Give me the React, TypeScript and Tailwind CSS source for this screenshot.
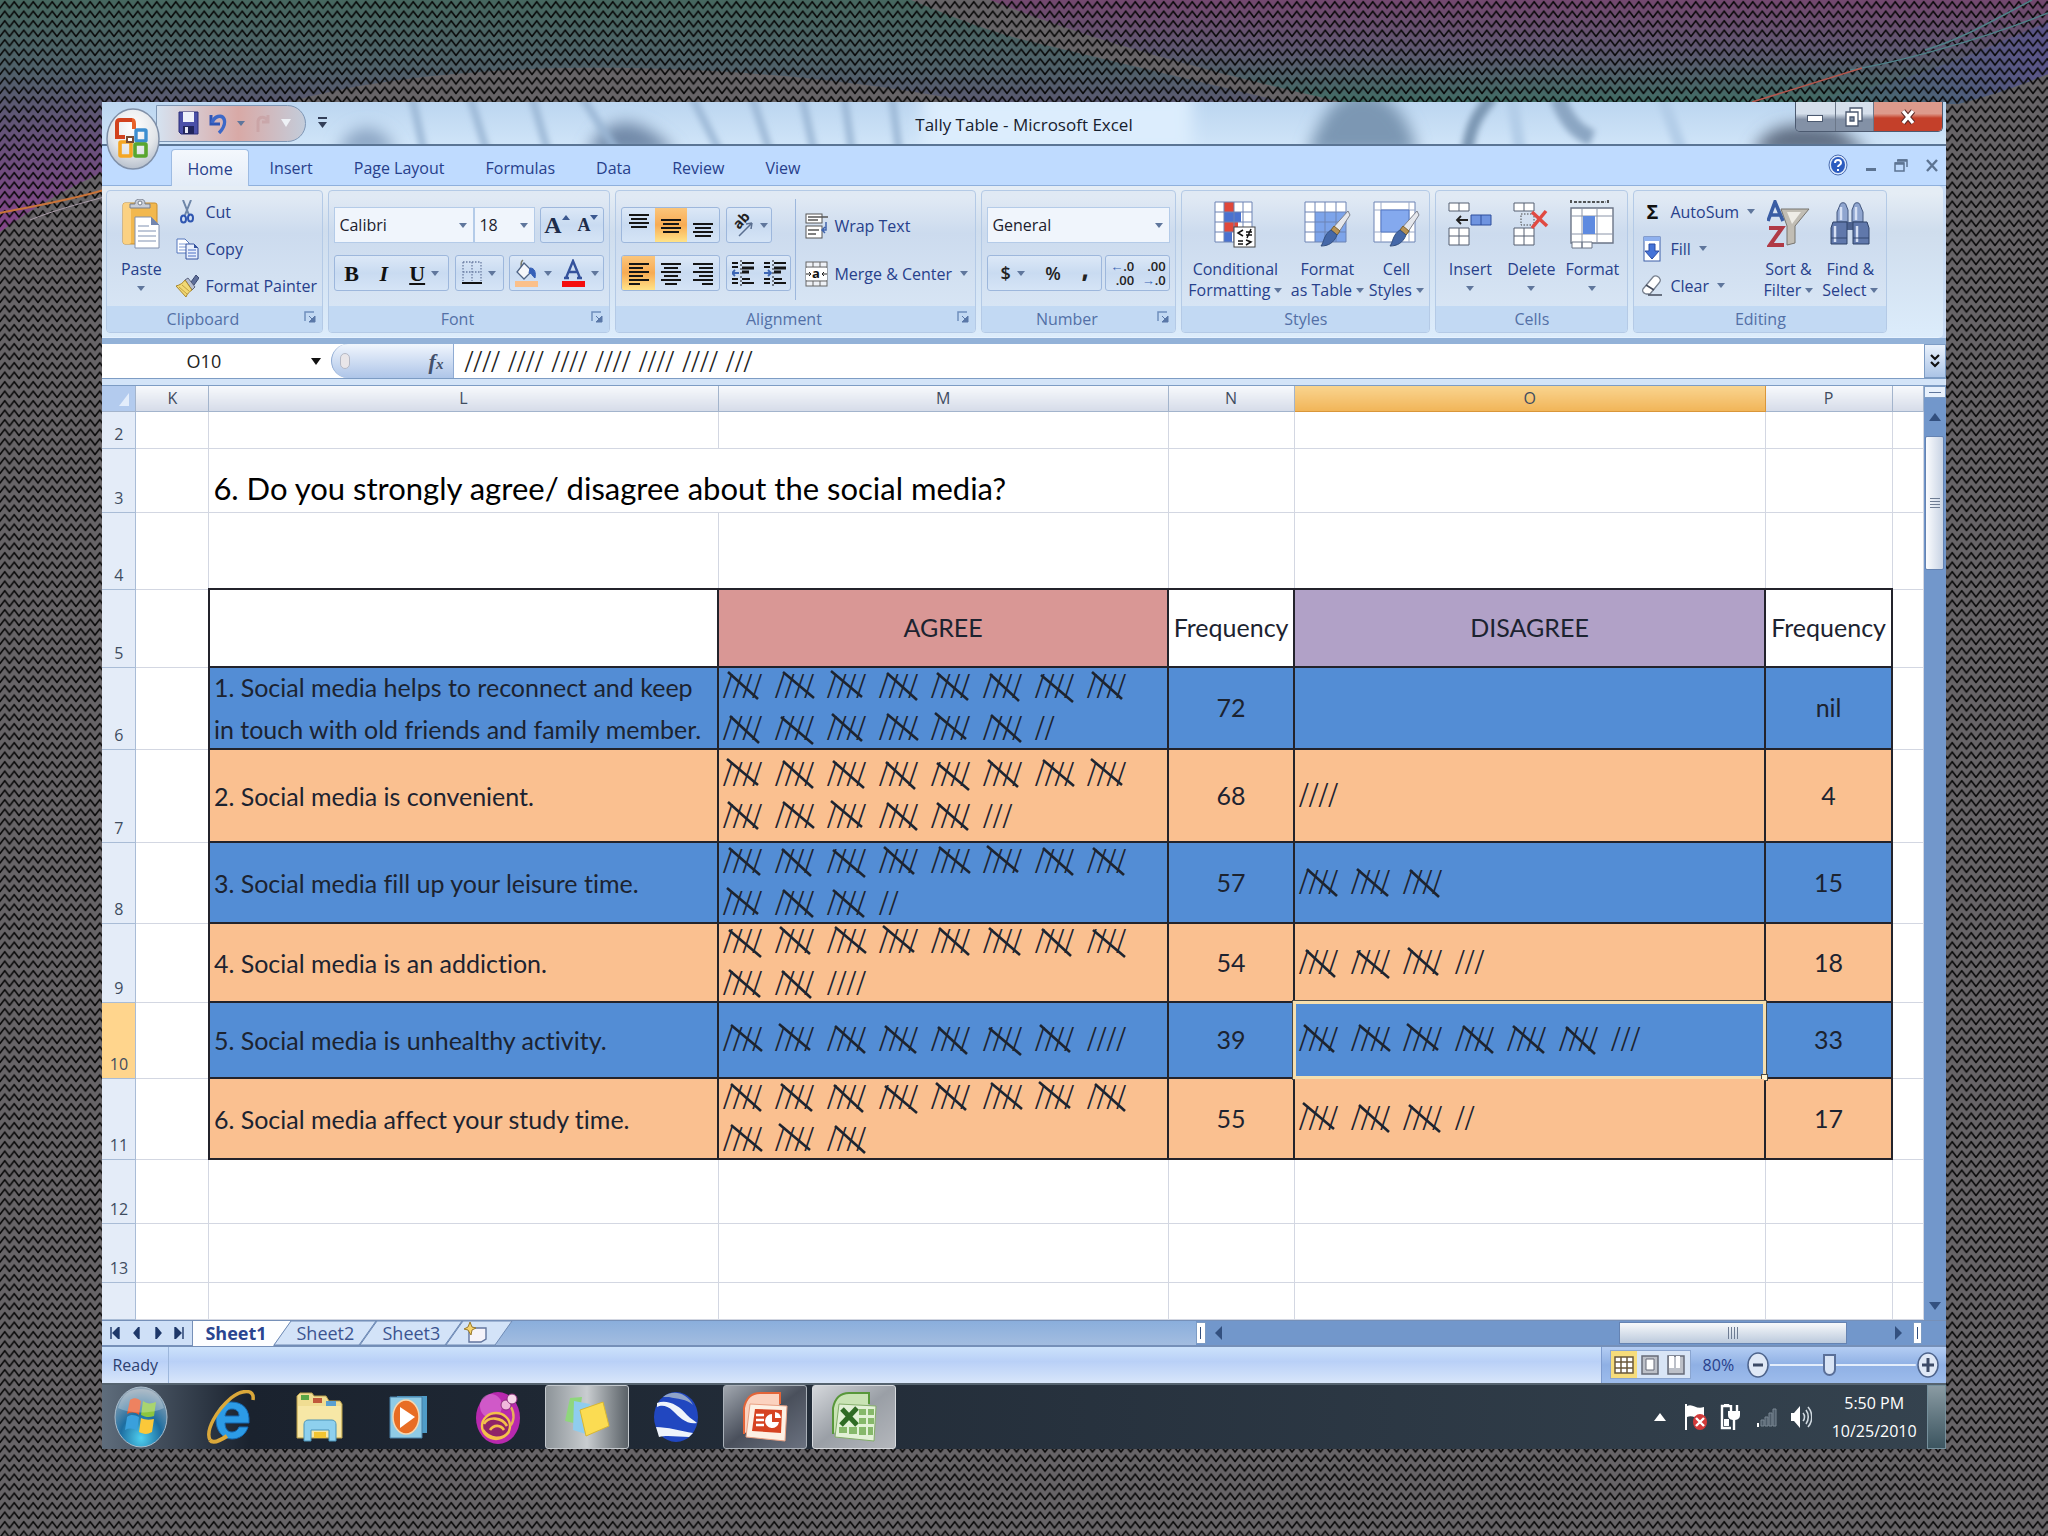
import React, { useState } from 'react'

const ui = "font-['Open_Sans','Noto_Sans',sans-serif]"
const cellFont = "font-['Lato','Open_Sans',sans-serif] [font-variant-ligatures:none]"
const slashFont = "font-['Liberation_Serif',serif]"

const topics = [
  { row: 6, height: 'h-[82px]', text: '1. Social media helps to reconnect and keep in touch with old friends and family member.', agree: 72, disagree: 0 },
  { row: 7, height: 'h-[93px]', text: '2. Social media is convenient.', agree: 68, disagree: 4 },
  { row: 8, height: 'h-[81px]', text: '3. Social media fill up your leisure time.', agree: 57, disagree: 15 },
  { row: 9, height: 'h-[79px]', text: '4. Social media is an addiction.', agree: 54, disagree: 18 },
  { row: 10, height: 'h-[76px]', text: '5. Social media is unhealthy activity.', agree: 39, disagree: 33 },
  { row: 11, height: 'h-[81px]', text: '6. Social media affect your study time.', agree: 55, disagree: 17 },
]

const tabs = ['Insert', 'Page Layout', 'Formulas', 'Data', 'Review', 'View']

/* Hand-drawn strike lines, cycled over the groups */
const strikes = ['M5 6L35 33', 'M8 7L38 34', 'M6 9L38 36', 'M4 5L35 31', 'M7 8L36 35', 'M8 6L39 32', 'M6 7L37 34']

function Backdrop() {
  return (
    <svg className="absolute inset-0 h-full w-full" viewBox="0 0 2048 1536" preserveAspectRatio="none" aria-hidden="true">
      <defs>
        <linearGradient id="waveLeft" x1="0" y1="0" x2="0" y2="1">
          <stop offset="0" stopColor="#46675f" />
          <stop offset="0.3" stopColor="#4f6069" />
          <stop offset="0.6" stopColor="#67517a" />
          <stop offset="1" stopColor="#85458a" />
        </linearGradient>
        <linearGradient id="waveRight" x1="0" y1="0" x2="0" y2="1">
          <stop offset="0" stopColor="#74486f" />
          <stop offset="0.45" stopColor="#5f5670" />
          <stop offset="1" stopColor="#3f6c63" />
        </linearGradient>
        <linearGradient id="waveEdge" x1="0" y1="0" x2="1" y2="0">
          <stop offset="0" stopColor="#4a6280" stopOpacity="0" />
          <stop offset="1" stopColor="#5a5488" />
        </linearGradient>
        <pattern id="zigzag" width="9.5" height="9.5" patternUnits="userSpaceOnUse">
          <path d="M-1 9.1L0 8L4.75 1.8L9.5 8L10.5 9.1" fill="none" stroke="#050505" strokeWidth="1.5" />
        </pattern>
      </defs>
      <rect width="2048" height="1536" fill="#676467" />
      <path d="M0 0H911C950 16 985 30 1024 40L1285 102H970C850 78 700 66 570 68C450 70 350 84 290 102C210 130 150 150 103 172C60 192 30 210 0 232Z" fill="url(#waveLeft)" />
      <path d="M990 0H2048V74C2010 90 1980 98 1958 104H1350C1200 70 1090 40 990 0Z" fill="url(#waveRight)" />
      <path d="M1780 104C1900 90 1980 50 2048 22V74C2010 90 1980 98 1958 104Z" fill="url(#waveEdge)" />
      <rect width="2048" height="1536" fill="url(#zigzag)" />
      <path d="M2032 0C1990 22 1960 40 1925 50M2048 13C1980 40 1900 62 1850 70" fill="none" stroke="#4f8088" strokeWidth="1.5" />
      <path d="M1862 68L1752 102" fill="none" stroke="#b4584f" strokeWidth="1.5" />
      <path d="M0 213C40 205 70 200 104 190" fill="none" stroke="#c9743a" strokeWidth="2" />
      <path d="M30 220C55 210 75 205 104 197" fill="none" stroke="#a99ba8" strokeWidth="1" />
    </svg>
  )
}

function Caret({ className = '' }: { className?: string }) {
  return (
    <svg viewBox="0 0 8 5" className={`h-[5px] w-2 shrink-0 ${className}`} aria-hidden="true">
      <path d="M0 0H8L4 5Z" fill="#5f769c" />
    </svg>
  )
}

function Box({ className = '', children }: { className?: string; children: React.ReactNode }) {
  return (
    <div className={`flex h-9 shrink-0 items-stretch overflow-hidden rounded-[3px] border border-[#9db7dc] bg-linear-to-b from-[#dce8f7] via-[#c9dbf1] to-[#d5e4f6] ${className}`}>
      {children}
    </div>
  )
}

function IconButton({ label, active, className = '', children }: { label: string; active?: boolean; className?: string; children: React.ReactNode }) {
  return (
    <button
      type="button"
      aria-label={label}
      className={`flex flex-1 items-center justify-center gap-[6px] ${active ? 'bg-linear-to-b from-[#fbc57a] via-[#f7ab52] to-[#ffe388]' : ''} ${className}`}
    >
      {children}
    </button>
  )
}

function Group({ title, launcher, className = '', children }: { title: string; launcher?: boolean; className?: string; children: React.ReactNode }) {
  return (
    <section className={`flex shrink-0 flex-col overflow-hidden rounded-[4px] border border-[#b4cae6] bg-linear-to-b from-[#e0e9f4] from-5% via-[#ccdbee] via-30% to-[#dbe8f6] ${className}`}>
      <div className="h-[115px]">{children}</div>
      <div className={`relative flex h-[26px] items-center justify-center bg-[#c2d9f3] text-[16px] text-[#5370a6] ${launcher ? 'pr-6' : ''}`}>
        {title}
        {launcher && (
          <button type="button" aria-label={`${title} options`} className="absolute top-[5px] right-[6px]">
            <svg viewBox="0 0 12 12" className="h-3 w-3">
              <path d="M1 10V1H10" fill="none" stroke="#6f8fbd" strokeWidth="1.5" />
              <path d="M5 5L9 9M11 5V11H5Z" fill="#5a78a8" stroke="#5a78a8" />
            </svg>
          </button>
        )}
      </div>
    </section>
  )
}

function LargeButton({ icon, lines, caretBelow, className = '' }: { icon: React.ReactNode; lines: string[]; caretBelow?: boolean; className?: string }) {
  return (
    <button type="button" className={`flex shrink-0 flex-col items-center pt-[8px] text-[16px] leading-[21px] text-[#27408b] ${className}`}>
      <span className="flex h-[50px] items-center">{icon}</span>
      <span className="mt-[10px] whitespace-nowrap">{lines[0]}</span>
      {lines[1] && (
        <span className="flex items-center gap-1 whitespace-nowrap">
          {lines[1]}
          <Caret />
        </span>
      )}
      {caretBelow && <Caret className="mt-[6px]" />}
    </button>
  )
}

function SmallButton({ icon, label, caret }: { icon: React.ReactNode; label: string; caret?: boolean }) {
  return (
    <button type="button" className="flex h-[37px] items-center gap-[6px] text-[16px] whitespace-nowrap text-[#27408b]">
      <span className="flex w-6 justify-center">{icon}</span>
      {label}
      {caret && <Caret className="ml-[2px]" />}
    </button>
  )
}

function SelectBox({ label, value, className = '' }: { label: string; value: string; className?: string }) {
  return (
    <label className={`relative flex h-9 items-center border border-[#b4cbe8] bg-[#f0f5fc] ${className}`}>
      <select aria-label={label} className="h-full w-full appearance-none bg-transparent pl-1 text-[16px] text-[#20202c]">
        <option>{value}</option>
      </select>
      <Caret className="pointer-events-none absolute right-[6px]" />
    </label>
  )
}

/* Icons */

function Lines({ rows, y = 0 }: { rows: number[][]; y?: number }) {
  return (
    <svg viewBox="0 0 22 24" className="h-6 w-[22px]" aria-hidden="true">
      {rows.map(([x1, x2], i) => (
        <path key={i} d={`M${x1} ${y + 2 + i * 4}H${x2}`} stroke="#151515" strokeWidth="2" />
      ))}
    </svg>
  )
}

function PasteIcon() {
  return (
    <svg viewBox="0 0 38 50" className="h-[50px] w-[38px]">
      <rect x="1" y="4" width="34" height="41" rx="2" fill="#f2b84e" stroke="#c98f2e" />
      <rect x="1" y="4" width="8" height="41" rx="2" fill="#fbd182" />
      <path d="M8 9V5H13C13 1 15 0 18 0S23 1 23 5H28V9Z" fill="#c9ced8" stroke="#767e8d" />
      <circle cx="18" cy="4" r="2" fill="#fff" stroke="#767e8d" />
      <path d="M13 18H29L37 26V49H13Z" fill="#fff" stroke="#8190ad" />
      <path d="M29 18V26H37Z" fill="#7486ad" />
      <path d="M16 27H27M16 32H34M16 37H34M16 42H34" stroke="#aab6cc" strokeWidth="1.3" />
    </svg>
  )
}

function CutIcon() {
  return (
    <svg viewBox="0 0 14 24" className="h-6 w-[14px]">
      <path d="M3 0L9 15M11 0L5 15" stroke="#6e86a8" strokeWidth="2" />
      <ellipse cx="3.5" cy="19" rx="2.5" ry="3.5" fill="none" stroke="#2e55b0" strokeWidth="2" />
      <ellipse cx="10.5" cy="18" rx="2.5" ry="3.5" fill="none" stroke="#2e55b0" strokeWidth="2" />
    </svg>
  )
}

function CopyIcon() {
  return (
    <svg viewBox="0 0 23 22" className="h-[22px] w-[23px]">
      <path d="M1 1H9L13 5V15H1Z" fill="#fff" stroke="#5577bd" />
      <path d="M3 6H10M3 9H10M3 12H10" stroke="#7d9ad6" />
      <path d="M10 6H18L22 10V21H10Z" fill="#e8effc" stroke="#34529e" />
      <path d="M18 6V10H22Z" fill="#34529e" />
      <path d="M12 12H20M12 15H20M12 18H20" stroke="#4a6fc4" />
    </svg>
  )
}

function PainterIcon() {
  return (
    <svg viewBox="0 0 23 23" className="h-[23px] w-[23px]">
      <path d="M15 8L20 1L23 4L18 11Z" fill="#5e6f9a" stroke="#3a4870" />
      <path d="M9 6L12 4L19 13L16 16Z" fill="#b8bfd0" stroke="#5c6480" />
      <path d="M0 12C4 11 7 9 9 6L16 16C13 18 11 20 10 23Z" fill="#f2d974" stroke="#a8862d" />
      <path d="M3 13L11 20M6 11L13 17" stroke="#c3a044" />
    </svg>
  )
}

function BordersIcon() {
  return (
    <svg viewBox="0 0 20 24" className="h-6 w-5">
      <path d="M1 1H19V20M1 1V20M10 1V20M1 11H19" fill="none" stroke="#6b7da3" strokeWidth="1.3" strokeDasharray="1.5 1.5" />
      <path d="M0 22H20" stroke="#111" strokeWidth="2" />
    </svg>
  )
}

function FillIcon() {
  return (
    <svg viewBox="0 0 23 28" className="h-7 w-[23px]">
      <path d="M8 1C5 3 6 10 8 12" fill="none" stroke="#7a7a6a" strokeWidth="1.5" />
      <path d="M9 4L17 12L9 20L2 13Z" fill="#f4f6fa" stroke="#4e6384" strokeWidth="1.3" />
      <path d="M15 9C20 9 21 14 20 19C17 17 17 14 14 14Z" fill="#3560b8" stroke="#3560b8" />
      <rect y="22" width="23" height="6" fill="#fbc08a" />
    </svg>
  )
}

function FontColorIcon() {
  return (
    <svg viewBox="0 0 23 28" className="h-7 w-[23px]">
      <path d="M4 19L11 2L18 19M7 13H15M2 19H7M15 19H20" fill="none" stroke="#34529c" strokeWidth="2.4" />
      <rect y="22" width="23" height="6" fill="#f40d0d" />
    </svg>
  )
}

function IndentIcon({ right }: { right?: boolean }) {
  return (
    <svg viewBox="0 0 22 26" className="h-[26px] w-[22px]">
      <path d="M0 3H6M0 7H6M0 19H6M0 23H6M10 3H22M10 19H18M10 23H22" stroke="#151515" strokeWidth="2" />
      <path d="M10 8H22M10 12H17" stroke="#151515" strokeWidth="3" />
      <path d="M9 0V26" stroke="#151515" strokeDasharray="2 2" />
      <path d={right ? 'M0 13H7M4 10L7 13L4 16' : 'M7 13H0M3 10L0 13L3 16'} fill="none" stroke="#3b65b4" strokeWidth="1.8" />
    </svg>
  )
}

function OrientationIcon() {
  return (
    <svg viewBox="0 0 24 26" className="h-[26px] w-6 overflow-visible">
      <text x="0" y="0" transform="translate(9 18) rotate(-48)" fontSize="14" fontWeight="700" fill="#222">ab</text>
      <path d="M9 24L22 11M22 11L16 12M22 11L21 17" fill="none" stroke="#5a6f90" strokeWidth="1.5" />
    </svg>
  )
}

function WrapIcon() {
  return (
    <svg viewBox="0 0 23 26" className="h-[26px] w-[23px]">
      <rect x="1" y="1" width="16" height="9" fill="#fff" stroke="#555" />
      <rect x="1" y="13" width="16" height="12" fill="#fff" stroke="#555" />
      <path d="M3 4H23M3 7H13M3 17H14M3 21H11" stroke="#555" strokeWidth="1.4" />
      <path d="M21 9V17H18M20 14L17 17L20 20" fill="none" stroke="#3f63ac" strokeWidth="1.5" />
    </svg>
  )
}

function MergeIcon() {
  return (
    <svg viewBox="0 0 23 26" className="h-[26px] w-[23px]">
      <rect x="1" y="1" width="21" height="24" fill="#eef1f6" stroke="#666" />
      <path d="M1 6H22M1 20H22M8 1V6M15 1V6M8 20V25M15 20V25" stroke="#666" />
      <rect x="1" y="7" width="21" height="12" fill="#fff" />
      <text x="11" y="17" textAnchor="middle" fontSize="13" fontWeight="700" fill="#111">a</text>
      <path d="M1 13H6M4 11L6 13L4 15M22 13H17M19 11L17 13L19 15" fill="none" stroke="#222" />
    </svg>
  )
}

function ConditionalIcon() {
  return (
    <svg viewBox="0 0 42 47" className="h-[47px] w-[42px]">
      <rect x="1" y="1" width="37" height="40" fill="#fff" />
      <path d="M10 1H20V11H10Z" fill="#e0483a" />
      <path d="M10 11H27V21H10Z" fill="#4a72d0" />
      <path d="M10 21H24V31H10Z" fill="#e0483a" />
      <path d="M10 31H18V41H10Z" fill="#4a72d0" />
      <path d="M1 1H38V41H1ZM1 11H38M1 21H38M1 31H38M10 1V41M20 1V41M29 1V41" fill="none" stroke="#6c83b4" />
      <rect x="20" y="26" width="21" height="20" fill="#fff" stroke="#444" />
      <path d="M29 29L24 32L29 35M32 39L37 41L32 44M24 40H29M24 43H29M32 31H38M32 34H38M37 28L33 37" fill="none" stroke="#111" strokeWidth="1.5" />
    </svg>
  )
}

function Brush() {
  return (
    <>
      <path d="M44 10L46 14L33 34L27 29Z" fill="#e5e7ec" stroke="#7d818c" />
      <path d="M33 34L27 29L30 25L36 30Z" fill="#b79254" stroke="#7b6030" />
      <path d="M27 29L33 34C30 42 24 45 17 45C20 41 20 33 27 29Z" fill="#4568a8" stroke="#34507f" />
    </>
  )
}

function TableStyleIcon() {
  return (
    <svg viewBox="0 0 47 47" className="h-[47px] w-[47px]">
      <rect x="1" y="1" width="41" height="40" fill="#fff" />
      <path d="M11 11H42V41H11Z" fill="#7da4ea" />
      <path d="M1 1H42V41H1ZM1 11H42M1 21H42M1 31H42M11 1V41M21 1V41M32 1V41" fill="none" stroke="#6c83b4" />
      <Brush />
    </svg>
  )
}

function CellStyleIcon() {
  return (
    <svg viewBox="0 0 47 47" className="h-[47px] w-[47px]">
      <path d="M1 1H42V41H1Z" fill="#fff" stroke="#6c83b4" />
      <path d="M8 1V41M36 1V41M1 9H42M1 31H42" stroke="#9aa9c8" />
      <path d="M8 9H36V31H8Z" fill="#84a9ee" stroke="#5579c4" />
      <Brush />
    </svg>
  )
}

function InsertIcon() {
  return (
    <svg viewBox="0 0 44 44" className="h-11 w-11">
      <path d="M1 1H21V9H1ZM11 1V9M1 26H21V43H1ZM11 26V43M1 34H21" fill="#fff" stroke="#555e70" />
      <path d="M23 13H43V23H23ZM33 13V23" fill="#6f94e0" stroke="#2f4f9c" />
      <path d="M20 18H9M13 14L9 18L13 22" fill="none" stroke="#222" strokeWidth="1.8" />
    </svg>
  )
}

function DeleteIcon() {
  return (
    <svg viewBox="0 0 36 44" className="h-11 w-9">
      <path d="M1 1H21V9H1ZM11 1V9M1 26H21V43H1ZM11 26V43M1 34H21" fill="#fff" stroke="#555e70" />
      <path d="M8 12H21V23H8Z" fill="none" stroke="#444" strokeDasharray="1.5 1.5" />
      <path d="M19 10L34 24M33 9L19 26" stroke="#e04a42" strokeWidth="3.5" />
    </svg>
  )
}

function FormatIcon() {
  return (
    <svg viewBox="0 0 44 50" className="h-[50px] w-11">
      <path d="M1 1V5M38 1V5M4 3H36" fill="none" stroke="#222" strokeWidth="1.5" strokeDasharray="3 1.5" />
      <path d="M1 9H43V44H1Z" fill="#fff" stroke="#6b7486" strokeWidth="1.4" />
      <path d="M12 9V44M27 9V44M1 17H43M1 35H43" stroke="#8a94a8" />
      <path d="M13 17H25V35H13Z" fill="#5e8ae0" />
      <path d="M2 43H12V49H2ZM12 43H22V49H12Z" fill="#fff" stroke="#6b7486" />
    </svg>
  )
}

function SortIcon() {
  return (
    <svg viewBox="0 0 43 48" className="h-12 w-[43px]">
      <path d="M14 9H42L28 26V43L20 45V26Z" fill="#c1bdb4" stroke="#77746e" />
      <path d="M20 12H34L25 24Z" fill="#eeece6" />
      <path d="M1 21L8 2L16 21M4 15H13" fill="none" stroke="#3a5da4" strokeWidth="3.6" />
      <path d="M2 28H15L3 45H17" fill="none" stroke="#b03a46" strokeWidth="4" />
    </svg>
  )
}

function FindIcon() {
  return (
    <svg viewBox="0 0 40 44" className="h-11 w-10">
      <path d="M10 3C10 0 16 0 16 3L18 8V20H7V10ZM24 3C24 0 30 0 30 3L33 10V20H22V8Z" fill="#8fa5cf" stroke="#43577f" />
      <path d="M16 20H24V28H16Z" fill="#4d628f" />
      <path d="M3 20H17V42H1V26ZM23 20H37L39 26V42H23Z" fill="#6078ab" stroke="#2f4268" />
      <path d="M5 24V40M27 24V40M11 5V18M26 5V18" stroke="#d6e0f4" strokeWidth="2.5" />
      <path d="M1 36H17M23 36H39" stroke="#33466e" />
    </svg>
  )
}

function FillDownIcon() {
  return (
    <svg viewBox="0 0 18 26" className="h-[26px] w-[18px]">
      <rect x="1" y="1" width="16" height="24" fill="#fff" stroke="#3d5fa8" />
      <rect x="1" y="1" width="16" height="4" fill="#8eb0ee" />
      <path d="M6 8H12V15H16L9 23L2 15H6Z" fill="#4473d8" stroke="#2a4da4" />
    </svg>
  )
}

function EraserIcon() {
  return (
    <svg viewBox="0 0 21 21" className="h-[21px] w-[21px]">
      <path d="M1 14L11 2C13 0 17 1 18 4C19 6 18 7 17 8L8 19H4C1 18 0 16 1 14Z" fill="#fff" stroke="#77808f" strokeWidth="1.3" />
      <path d="M6 20H20M4 10L12 15" stroke="#444c5c" strokeWidth="1.6" />
    </svg>
  )
}

function OfficeLogo() {
  return (
    <svg viewBox="0 0 56 64" className="h-16 w-14">
      <defs>
        <radialGradient id="orb" cx="0.5" cy="0.3" r="0.75">
          <stop offset="0" stopColor="#ffffff" />
          <stop offset="0.6" stopColor="#e3e6ea" />
          <stop offset="1" stopColor="#aeb8c6" />
        </radialGradient>
      </defs>
      <ellipse cx="28" cy="32" rx="26" ry="30" fill="url(#orb)" stroke="#8090a8" strokeWidth="1.5" />
      <g fill="none" strokeWidth="4">
        <path d="M27 13H15C13 13 12 14 12 16V30H20" stroke="#d2421e" />
        <path d="M27 13C29 13 29 15 29 17V22" stroke="#e8622a" />
        <rect x="31" y="23" width="10" height="11" rx="1" stroke="#3c8ed0" strokeWidth="3.4" />
        <rect x="15" y="35" width="11" height="14" rx="1" stroke="#f5a623" strokeWidth="3.6" />
        <rect x="30" y="37" width="11" height="12" rx="1" stroke="#59a62f" strokeWidth="3.6" />
      </g>
      <path d="M21 29H29V36H21Z" fill="#7a4a30" />
      <path d="M23 31H27V34H23Z" fill="#fff" />
    </svg>
  )
}

function SaveIcon() {
  return (
    <svg viewBox="0 0 21 24" className="h-6 w-[21px]">
      <path d="M1 1H20V23H3L1 21Z" fill="#4a4fa8" stroke="#2b2f78" />
      <rect x="5" y="1" width="11" height="10" fill="#eef1fb" />
      <rect x="5" y="15" width="11" height="8" fill="#20245c" />
      <rect x="7" y="16" width="3" height="6" fill="#e8eaf6" />
    </svg>
  )
}

function UndoIcon() {
  return (
    <svg viewBox="0 0 18 21" className="h-[21px] w-[18px]">
      <path d="M2 2V11H11" fill="none" stroke="#2f55b4" strokeWidth="3" />
      <path d="M3 10C5 3 13 1 15 6C17 11 13 17 10 20" fill="none" stroke="#3d68c8" strokeWidth="3.4" />
    </svg>
  )
}

/* Title bar with the blurred glass behind it */
function TitleBar() {
  return (
    <header className="relative flex h-[44px] items-center border-b-2 border-[#5b7594] bg-linear-to-b from-[#bcd6f0] to-[#cfe4f8]">
      <svg className="absolute inset-0 h-full w-full" viewBox="0 0 1843 42" preserveAspectRatio="none" aria-hidden="true">
        <defs>
          <filter id="glass" x="-10%" y="-50%" width="120%" height="200%"><feGaussianBlur stdDeviation="8" /></filter>
          <filter id="streaks" x="-10%" y="-50%" width="120%" height="200%"><feGaussianBlur stdDeviation="3" /></filter>
        </defs>
        <g filter="url(#glass)">
          <path d="M820 -10H1090V52H820Z" fill="#dcedfd" />
          <path d="M235 52C245 20 280 14 295 52Z" fill="#8ca6c4" />
          <path d="M485 52C500 14 535 6 575 52Z" fill="#7189a8" />
          <path d="M1205 52C1220 10 1235 -10 1260 -10C1290 -10 1310 20 1315 52Z" fill="#7c97b3" />
          <path d="M1650 52C1665 20 1690 20 1735 26L1770 52Z" fill="#5f6d82" />
        </g>
        <g filter="url(#streaks)" fill="none">
          <path d="M310 -5L322 50M368 -5L385 50M430 -5L446 50M480 -5L515 50M590 -5L618 50M650 -5L668 50M700 -5L712 50M742 -5L750 50M790 -5L797 50" stroke="#9ab6d4" strokeWidth="7" />
          <path d="M1365 50C1368 25 1375 12 1390 -5" stroke="#7c97b3" strokeWidth="12" />
          <path d="M1455 -5C1465 20 1475 30 1490 36" stroke="#8ba6c3" strokeWidth="16" />
          <path d="M1410 -5L1418 50M1560 -5L1580 50" stroke="#b3cde8" strokeWidth="12" />
        </g>
      </svg>
      <div className="relative ml-[54px] flex h-[37px] w-[150px] items-center gap-[10px] rounded-r-full border border-[#7f97b5] bg-linear-to-r from-[#d5e2f0] via-[#d8a9a6] via-55% to-[#c3ccda] pl-[21px]">
        <button type="button" aria-label="Save"><SaveIcon /></button>
        <button type="button" aria-label="Undo"><UndoIcon /></button>
        <Caret />
        <svg viewBox="0 0 16 20" className="h-5 w-4 opacity-40"><path d="M3 19V8C4 3 10 3 13 8M13 2V9H7" fill="none" stroke="#c08f92" strokeWidth="3" /></svg>
        <svg viewBox="0 0 10 8" className="h-2 w-[10px]"><path d="M0 0H10L5 8Z" fill="#eef1f6" /></svg>
      </div>
      <button type="button" aria-label="Customize toolbar" className="relative ml-3">
        <svg viewBox="0 0 9 12" className="h-3 w-[9px]"><path d="M0 1H9" stroke="#333f58" strokeWidth="2" /><path d="M0 5H9L4.5 11Z" fill="#333f58" /></svg>
      </button>
      <h1 className="absolute inset-x-0 pt-1 text-center text-[17px] text-[#16202e]">Tally Table - Microsoft Excel</h1>
      <div className="relative mr-[3px] ml-auto flex h-[30px] self-start overflow-hidden rounded-b-[5px] border border-t-0 border-[#4c5a70]">
        <button type="button" aria-label="Minimize" className="flex w-10 items-center justify-center border-r border-[#6b7789] bg-linear-to-b from-[#d5dfeb] from-40% to-[#8391a6] to-60%">
          <span className="mt-1 h-[7px] w-4 border border-[#4c5a70] bg-white" />
        </button>
        <button type="button" aria-label="Restore" className="flex w-[38px] items-center justify-center border-r border-[#6b7789] bg-linear-to-b from-[#d5dfeb] from-40% to-[#8391a6] to-60%">
          <svg viewBox="0 0 18 20" className="h-5 w-[18px]">
            <path d="M5 1H17V14H5Z" fill="#fff" stroke="#4c5a70" strokeWidth="1.3" />
            <path d="M1 5H13V19H1Z" fill="#fff" stroke="#4c5a70" strokeWidth="1.3" />
            <path d="M5 10H9V14H5Z" fill="#8391a6" stroke="#4c5a70" strokeWidth="1.3" />
          </svg>
        </button>
        <button type="button" aria-label="Close" className="flex w-[68px] items-center justify-center bg-linear-to-b from-[#dd9a8c] from-40% to-[#c4402a] to-55%">
          <svg viewBox="0 0 16 16" className="h-4 w-4">
            <path d="M3 2L13 14M13 2L3 14" stroke="#5c2a28" strokeWidth="5.5" />
            <path d="M3 2L13 14M13 2L3 14" stroke="#fff" strokeWidth="3.4" />
          </svg>
        </button>
      </div>
      <button type="button" aria-label="Office menu" className="absolute top-[5px] left-[3px] z-10"><OfficeLogo /></button>
    </header>
  )
}

function RibbonTabs() {
  return (
    <nav className="flex h-[40px] items-end gap-px border-b border-[#8fb0dc] bg-[#bfdbff] pr-2 pl-[69px] text-[16px] text-[#27408b]">
      <button type="button" className="-mb-px h-[37px] rounded-t-[4px] border border-b-0 border-[#9dbbe2] bg-linear-to-b from-[#f4f8fd] to-[#e3ecf7] px-[15px] pt-[2px]">Home</button>
      {tabs.map((tab) => (
        <button type="button" key={tab} className="h-[37px] px-5 pt-[2px]">{tab}</button>
      ))}
      <div className="mb-[9px] ml-auto flex items-center gap-[18px]">
        <button type="button" aria-label="Help">
          <svg viewBox="0 0 20 22" className="h-[22px] w-5">
            <ellipse cx="10" cy="11" rx="9" ry="10" fill="#dce8fa" stroke="#4a6cb0" />
            <ellipse cx="10" cy="11" rx="7" ry="8" fill="#2c5cc0" />
            <path d="M7 9C7 5 13 5 13 9C13 11 10 11 10 13M10 15V17" fill="none" stroke="#fff" strokeWidth="2" />
          </svg>
        </button>
        <button type="button" aria-label="Minimize workbook"><span className="mt-2 block h-[3px] w-[10px] bg-[#5d7492]" /></button>
        <button type="button" aria-label="Restore workbook">
          <svg viewBox="0 0 14 13" className="h-[13px] w-[14px]"><path d="M4 1H13V8M1 4H10V12H1Z" fill="none" stroke="#5d7492" strokeWidth="1.5" /><path d="M3 1.5H13M1 4.5H10" stroke="#5d7492" strokeWidth="2.5" /></svg>
        </button>
        <button type="button" aria-label="Close workbook">
          <svg viewBox="0 0 12 13" className="h-[13px] w-3"><path d="M1 1L11 12M11 1L1 12" stroke="#5d7492" strokeWidth="2.4" /></svg>
        </button>
      </div>
    </nav>
  )
}

function Ribbon() {
  return (
    <div className="bg-[#c9dcf5] pr-[3px]">
      <div className="flex gap-[5px] rounded-r-[5px] border-b border-[#e6f2ff] bg-linear-to-b from-[#e5edf5] from-5% via-[#cfdded] via-30% to-[#dcecfb] pt-[4px] pb-[4px] pl-[4px]">
        <Group title="Clipboard" launcher className="w-[217px]">
          <div className="flex">
            <LargeButton icon={<PasteIcon />} lines={['Paste']} caretBelow className="w-[68px]" />
            <div className="flex flex-col pt-[2px]">
              <SmallButton icon={<CutIcon />} label="Cut" />
              <SmallButton icon={<CopyIcon />} label="Copy" />
              <SmallButton icon={<PainterIcon />} label="Format Painter" />
            </div>
          </div>
        </Group>

        <Group title="Font" launcher className="w-[282px]">
          <div className="flex flex-col gap-3 px-[5px] pt-4">
            <div className="flex">
              <SelectBox label="Font" value="Calibri" className="w-[140px]" />
              <SelectBox label="Font size" value="18" className="w-[61px]" />
              <Box className="ml-auto w-[64px]">
                <IconButton label="Grow font">
                  <span className="font-['Liberation_Serif',serif] text-[24px] font-bold text-[#1d2c4a]">A</span>
                  <svg viewBox="0 0 8 5" className="mb-4 -ml-[6px] h-[5px] w-2"><path d="M0 5H8L4 0Z" fill="#3b5890" /></svg>
                </IconButton>
                <IconButton label="Shrink font">
                  <span className="font-['Liberation_Serif',serif] text-[18px] font-bold text-[#1d2c4a]">A</span>
                  <svg viewBox="0 0 8 5" className="mb-4 -ml-[6px] h-[5px] w-2"><path d="M0 0H8L4 5Z" fill="#3b5890" /></svg>
                </IconButton>
              </Box>
            </div>
            <div className="flex justify-between">
              <Box className="w-[115px] font-['Liberation_Serif',serif] text-[22px] text-[#111]">
                <IconButton label="Bold"><b>B</b></IconButton>
                <IconButton label="Italic"><i className="font-bold">I</i></IconButton>
                <IconButton label="Underline" className="grow-[1.5]"><span className="font-bold underline">U</span><Caret /></IconButton>
              </Box>
              <Box className="w-[49px]"><IconButton label="Borders"><BordersIcon /><Caret /></IconButton></Box>
              <Box className="w-[95px]">
                <IconButton label="Fill color"><FillIcon /><Caret /></IconButton>
                <IconButton label="Font color"><FontColorIcon /><Caret /></IconButton>
              </Box>
            </div>
          </div>
        </Group>

        <Group title="Alignment" launcher className="w-[361px]">
          <div className="flex pt-4 pl-[5px]">
            <div className="flex w-[170px] flex-col gap-3">
              <div className="flex gap-[6px]">
                <Box className="w-[99px]">
                  <IconButton label="Top align"><Lines rows={[[1, 21], [3, 19], [1, 21], [3, 19]]} /></IconButton>
                  <IconButton label="Middle align" active><Lines y={5} rows={[[1, 21], [3, 19], [1, 21], [3, 19]]} /></IconButton>
                  <IconButton label="Bottom align"><Lines y={9} rows={[[1, 21], [3, 19], [1, 21], [3, 19]]} /></IconButton>
                </Box>
                <Box className="w-[46px]"><IconButton label="Orientation" className="gap-[2px]"><OrientationIcon /><Caret /></IconButton></Box>
              </div>
              <div className="flex gap-[6px]">
                <Box className="w-[99px]">
                  <IconButton label="Align left" active><Lines y={1} rows={[[1, 21], [1, 15], [1, 21], [1, 15], [1, 21], [1, 12]]} /></IconButton>
                  <IconButton label="Center"><Lines y={1} rows={[[1, 21], [4, 18], [1, 21], [4, 18], [1, 21], [5, 17]]} /></IconButton>
                  <IconButton label="Align right"><Lines y={1} rows={[[1, 21], [7, 21], [1, 21], [7, 21], [1, 21], [10, 21]]} /></IconButton>
                </Box>
                <Box className="w-[65px]">
                  <IconButton label="Decrease indent"><IndentIcon /></IconButton>
                  <IconButton label="Increase indent"><IndentIcon right /></IconButton>
                </Box>
              </div>
            </div>
            <div className="-mt-2 ml-[4px] flex flex-col gap-[11px] border-l border-[#9db7dc] py-2 pl-[8px]">
              <SmallButton icon={<WrapIcon />} label="Wrap Text" />
              <SmallButton icon={<MergeIcon />} label="Merge & Center" caret />
            </div>
          </div>
        </Group>

        <Group title="Number" launcher className="w-[195px]">
          <div className="flex flex-col gap-3 px-[5px] pt-4">
            <SelectBox label="Number format" value="General" />
            <div className="flex justify-between text-[18px] font-semibold text-[#222]">
              <Box className="w-[115px]">
                <IconButton label="Currency" className="grow-[1.5] gap-3"><span>$</span><Caret /></IconButton>
                <IconButton label="Percent">%</IconButton>
                <IconButton label="Comma style"><b className="mb-2 text-[22px] leading-none">,</b></IconButton>
              </Box>
              <Box className="w-[65px] text-[13px] leading-[14px]">
                <IconButton label="Increase decimal"><span className="text-right"><span className="text-[#3b65b4]">←</span>.0<br />.00</span></IconButton>
                <IconButton label="Decrease decimal"><span className="text-right">.00<br /><span className="text-[#3b65b4]">→</span>.0</span></IconButton>
              </Box>
            </div>
          </div>
        </Group>

        <Group title="Styles" className="w-[249px]">
          <div className="flex">
            <LargeButton icon={<ConditionalIcon />} lines={['Conditional', 'Formatting']} className="w-[106px]" />
            <LargeButton icon={<TableStyleIcon />} lines={['Format', 'as Table']} className="w-[78px]" />
            <LargeButton icon={<CellStyleIcon />} lines={['Cell', 'Styles']} className="w-[60px]" />
          </div>
        </Group>

        <Group title="Cells" className="w-[193px]">
          <div className="flex pl-[3px]">
            <LargeButton icon={<InsertIcon />} lines={['Insert']} caretBelow className="w-[62px]" />
            <LargeButton icon={<DeleteIcon />} lines={['Delete']} caretBelow className="w-[60px]" />
            <LargeButton icon={<FormatIcon />} lines={['Format']} caretBelow className="w-[62px]" />
          </div>
        </Group>

        <Group title="Editing" className="w-[254px]">
          <div className="flex">
            <div className="flex w-[123px] flex-col pt-[2px] pl-[6px]">
              <SmallButton icon={<span className="text-[20px] font-bold text-[#111]">Σ</span>} label="AutoSum" caret />
              <SmallButton icon={<FillDownIcon />} label="Fill" caret />
              <SmallButton icon={<EraserIcon />} label="Clear" caret />
            </div>
            <LargeButton icon={<SortIcon />} lines={['Sort &', 'Filter']} className="w-[62px]" />
            <LargeButton icon={<FindIcon />} lines={['Find &', 'Select']} className="w-[62px]" />
          </div>
        </Group>
      </div>
    </div>
  )
}

function FormulaBar() {
  const [formula, setFormula] = useState('//// //// //// //// //// //// ///')
  return (
    <div className="border-t-[6px] border-b-[6px] border-t-[#93b2d8] border-b-[#d3e4f8]">
      <div className="flex h-[35px] border-b border-[#7d9cc4] bg-white">
        <label className="relative flex w-[229px] items-center">
          <input aria-label="Name box" defaultValue="O10" className="w-full bg-transparent pr-[26px] text-center text-[18px] text-[#222]" />
          <svg viewBox="0 0 10 7" className="absolute right-[10px] h-[7px] w-[10px]"><path d="M0 0H10L5 7Z" fill="#111" /></svg>
        </label>
        <div className="flex w-[123px] items-center justify-between rounded-l-full border-r border-l border-[#8fabd3] bg-linear-to-b from-[#f1f6fd] to-[#aec5e8] pr-[10px] pl-2">
          <span className="h-4 w-[10px] rounded-full border border-[#b5b9c6] bg-[#e9e6e9]" />
          <button type="button" aria-label="Insert function" className="font-['Liberation_Serif',serif] text-[22px] font-bold text-[#42506c] italic">f<small className="text-[15px]">x</small></button>
        </div>
        <input
          aria-label="Formula"
          value={formula}
          onChange={(e) => setFormula(e.target.value)}
          className={`min-w-0 flex-1 pl-[10px] text-[32px] text-[#222] ${slashFont}`}
        />
        <button type="button" aria-label="Expand formula bar" className="flex w-[22px] items-center justify-center border border-[#7d9cc4] bg-linear-to-b from-[#eaf2fc] to-[#abc4e6]">
          <svg viewBox="0 0 10 14" className="h-[14px] w-[10px]"><path d="M1 1L5 5L9 1M1 8L5 12L9 8" fill="none" stroke="#111" strokeWidth="2.2" /></svg>
        </button>
      </div>
    </div>
  )
}

function Tally({ count, seed }: { count: number; seed: number }) {
  const full = Math.floor(count / 5)
  const groups = Array.from({ length: full }, () => 5)
  if (count % 5) groups.push(count % 5)
  const rows: number[][] = []
  for (let i = 0; i < groups.length; i += 8) rows.push(groups.slice(i, i + 8))

  return (
    <div className={`-my-1 pl-[4px] text-[35px] leading-[42px] text-[#1d2430] ${slashFont}`}>
      {rows.map((row, r) => (
        <div key={r} className="flex gap-[14px]">
          {row.map((n, i) => (
            <span key={i} className="relative w-[38px] whitespace-nowrap">
              {'/'.repeat(Math.min(n, 4))}
              {n === 5 && (
                <svg viewBox="0 0 40 42" className="absolute top-0 left-0 h-[42px] w-10" aria-hidden="true">
                  <path d={strikes[(seed * 3 + r * 4 + i * 5) % strikes.length]} stroke="#1d2430" strokeWidth="2.6" />
                </svg>
              )}
            </span>
          ))}
        </div>
      ))}
    </div>
  )
}

function RowHead({ n, active }: { n: number | string; active?: boolean }) {
  return (
    <th scope="row" className={`border border-[#a9bcd6] border-l-0 p-0 pb-1 align-bottom text-[16px] leading-[20px] font-normal text-[#3f4c60] ${ui} ${active ? 'bg-[#ffd58d]' : 'bg-[#e4ecf8]'}`}>{n}</th>
  )
}

function Sheet() {
  const line = 'border border-[#d3d7e2]'
  const ink = 'border-2 border-[#23232b]'
  const head = 'border-r border-b border-[#a3b4cc] bg-linear-to-b from-[#f7f9fc] to-[#d6dce9] p-0 font-normal'
  return (
    <table className={`min-w-0 flex-1 table-fixed border-collapse bg-white text-[#1c2330] ${cellFont}`}>
      <colgroup>
        <col className="w-[33px]" />
        <col className="w-[73px]" />
        <col />
        <col className="w-[450px]" />
        <col className="w-[126px]" />
        <col className="w-[471px]" />
        <col className="w-[127px]" />
        <col className="w-[31px]" />
      </colgroup>
      <thead className={`text-[16px] leading-[20px] text-[#3f4c60] ${ui}`}>
        <tr className="h-[25px]">
          <th className="border-r border-b border-[#a3b4cc] bg-[#b3cbee] p-0">
            <svg viewBox="0 0 33 24" className="ml-auto h-6 w-[33px]" aria-hidden="true"><path d="M27 7V20H17Z" fill="#e3edfb" /></svg>
          </th>
          <th className={head}>K</th>
          <th className={head}>L</th>
          <th className={head}>M</th>
          <th className={head}>N</th>
          <th className="border-r border-b border-[#d9963a] bg-linear-to-b from-[#f9d48e] to-[#f1b558] p-0 font-normal">O</th>
          <th className={head}>P</th>
          <th className={head}></th>
        </tr>
      </thead>
      <tbody>
        <tr className="h-[37px]">
          <RowHead n={2} />
          <td className={line} /><td className={line} /><td className={line} /><td className={line} /><td className={line} /><td className={line} /><td className={line} />
        </tr>
        <tr className="h-[64px]">
          <RowHead n={3} />
          <td className={line} />
          <td colSpan={2} className={`${line} p-0 pt-4 pl-[4px] text-[31px] leading-[40px] text-black`}>6. Do you strongly agree/ disagree about the social media?</td>
          <td className={line} /><td className={line} /><td className={line} /><td className={line} />
        </tr>
        <tr className="h-[77px]">
          <RowHead n={4} />
          <td className={line} /><td className={line} /><td className={line} /><td className={line} /><td className={line} /><td className={line} /><td className={line} />
        </tr>
        <tr className="h-[78px] text-center text-[25px]">
          <RowHead n={5} />
          <td className={line} />
          <td className={ink} />
          <td className={`${ink} bg-[#d99795]`}>AGREE</td>
          <td className={`${ink} p-0`}>Frequency</td>
          <td className={`${ink} bg-[#b1a1c7]`}>DISAGREE</td>
          <td className={`${ink} p-0`}>Frequency</td>
          <td className={line} />
        </tr>
        {topics.map((t, i) => (
          <tr key={t.row} className={t.height}>
            <RowHead n={t.row} active={t.row === 10} />
            <td className={line} />
            <td className={`${ink} p-0 pl-[4px] text-[25px] leading-[42px] ${i % 2 ? 'bg-[#fac090]' : 'bg-[#538dd5]'}`}><div className="-my-1">{t.text}</div></td>
            <td className={`${ink} p-0 ${i % 2 ? 'bg-[#fac090]' : 'bg-[#538dd5]'}`}><Tally count={t.agree} seed={i} /></td>
            <td className={`${ink} p-0 text-center text-[25px] ${i % 2 ? 'bg-[#fac090]' : 'bg-[#538dd5]'}`}>{t.agree}</td>
            <td className={`${ink} relative p-0 ${i % 2 ? 'bg-[#fac090]' : 'bg-[#538dd5]'}`}>
              <Tally count={t.disagree} seed={i + 3} />
              {t.row === 10 && (
                <span className="absolute -inset-[2px] border-[3px] border-[#f5dfae] outline outline-[#4b4a45]">
                  <span className="absolute -right-[5px] -bottom-[5px] h-[7px] w-[7px] border border-[#4b4a45] bg-[#fff3cf]" />
                </span>
              )}
            </td>
            <td className={`${ink} p-0 text-center text-[25px] ${i % 2 ? 'bg-[#fac090]' : 'bg-[#538dd5]'}`}>{t.disagree || 'nil'}</td>
            <td className={line} />
          </tr>
        ))}
        {[{ n: 12, h: 'h-[64px]' }, { n: 13, h: 'h-[59px]' }, { n: '', h: 'h-[37px]' }].map((r) => (
          <tr key={r.n} className={r.h}>
            <RowHead n={r.n} />
            <td className={line} /><td className={line} /><td className={line} /><td className={line} /><td className={line} /><td className={line} /><td className={line} />
          </tr>
        ))}
      </tbody>
    </table>
  )
}

function VerticalScroll() {
  return (
    <div className="flex w-[22px] shrink-0 flex-col items-center bg-[#7297cb]">
      <span className="flex h-3 w-full items-center justify-center border border-[#7d9cc4] bg-[#e8f1fc]"><span className="h-px w-3 bg-[#5f769c]" /></span>
      <button type="button" aria-label="Scroll up" className="flex h-[38px] items-center">
        <svg viewBox="0 0 12 8" className="h-2 w-3"><path d="M0 8H12L6 0Z" fill="#33507f" /></svg>
      </button>
      <div className="flex h-[134px] w-[19px] flex-col items-center justify-center gap-[2px] rounded-[2px] border border-[#6583b2] bg-linear-to-r from-[#fbfcfe] to-[#c8d3e4]">
        <span className="h-px w-[10px] bg-[#6e7c93]" /><span className="h-px w-[10px] bg-[#6e7c93]" /><span className="h-px w-[10px] bg-[#6e7c93]" /><span className="h-px w-[10px] bg-[#6e7c93]" />
      </div>
      <button type="button" aria-label="Scroll down" className="mt-auto mb-[10px]">
        <svg viewBox="0 0 12 8" className="h-2 w-3"><path d="M0 0H12L6 8Z" fill="#33507f" /></svg>
      </button>
    </div>
  )
}

function SheetTab({ label }: { label: string }) {
  return (
    <button type="button" className="relative -mr-[18px] flex h-[25px] w-[104px] items-center justify-center text-[18px] leading-[24px] text-[#3c5490]">
      <svg viewBox="0 0 104 25" className="absolute inset-0 h-[25px] w-[104px]" aria-hidden="true">
        <path d="M1 24L18 0H103L86 24Z" fill="#d3e3f8" stroke="#6f8ab4" />
      </svg>
      <span className="relative">{label}</span>
    </button>
  )
}

function SheetBar() {
  const navs = [
    { label: 'First sheet', d: 'M1 0V12M9 0L3 6L9 12Z' },
    { label: 'Previous sheet', d: 'M7 0L2 6L7 12Z' },
    { label: 'Next sheet', d: 'M3 0L8 6L3 12Z' },
    { label: 'Last sheet', d: 'M9 0V12M1 0L7 6L1 12Z' },
  ]
  return (
    <div className="flex h-[27px] border-t border-b-2 border-[#7690b8] bg-linear-to-b from-[#8aaedc] to-[#a3bde0]">
      <div className="flex w-[91px] items-center justify-between border-r border-[#7690b8] bg-[#cfe0f7] px-2">
        {navs.map((n) => (
          <button type="button" key={n.label} aria-label={n.label}>
            <svg viewBox="0 0 10 12" className="h-3 w-[10px]"><path d={n.d} fill="#1f3869" stroke="#1f3869" strokeWidth="1.4" /></svg>
          </button>
        ))}
      </div>
      <button type="button" className="relative -mr-[18px] flex h-[25px] w-[98px] items-center pl-3 text-[18px] leading-[24px] font-bold text-[#2a4590]">
        <svg viewBox="0 0 98 25" className="absolute inset-0 h-[25px] w-[98px]" aria-hidden="true"><path d="M0 0H98L80 25H0Z" fill="#fdfeff" /></svg>
        <span className="relative">Sheet1</span>
      </button>
      <SheetTab label="Sheet2" />
      <SheetTab label="Sheet3" />
      <button type="button" aria-label="Insert worksheet" className="relative h-[25px] w-[68px]">
        <svg viewBox="0 0 68 25" className="h-[25px] w-[68px]">
          <path d="M1 24L18 0H67L50 24Z" fill="#d3e3f8" stroke="#6f8ab4" />
          <path d="M24 7H41V18L36 21H24Z" fill="#f5f3fa" stroke="#63769e" strokeWidth="1.4" />
          <path d="M25 1L27 6L31 7L27 9L26 14L23 9L19 8L23 6Z" fill="#f7d36b" stroke="#9a7a2c" />
        </svg>
      </button>
      <div className="ml-auto flex w-[750px] items-center bg-[#7297cb]">
        <span className="flex h-[22px] w-[10px] items-center justify-center border border-[#7d9cc4] bg-white"><span className="h-3 w-px bg-[#33507f]" /></span>
        <button type="button" aria-label="Scroll left" className="ml-2">
          <svg viewBox="0 0 8 14" className="h-[14px] w-2"><path d="M8 0V14L1 7Z" fill="#33507f" /></svg>
        </button>
        <div className="ml-auto flex h-[22px] w-[228px] items-center justify-center gap-[2px] border border-[#6583b2] bg-linear-to-b from-[#f7f9fb] to-[#bccadd]">
          <span className="h-3 w-px bg-[#6e7c93]" /><span className="h-3 w-px bg-[#6e7c93]" /><span className="h-3 w-px bg-[#6e7c93]" /><span className="h-3 w-px bg-[#6e7c93]" />
        </div>
        <button type="button" aria-label="Scroll right" className="ml-12">
          <svg viewBox="0 0 8 14" className="h-[14px] w-2"><path d="M0 0V14L7 7Z" fill="#33507f" /></svg>
        </button>
        <span className="mr-[24px] ml-[10px] flex h-[22px] w-[9px] items-center justify-center border border-[#7d9cc4] bg-white"><span className="h-3 w-px bg-[#33507f]" /></span>
      </div>
    </div>
  )
}

function StatusBar() {
  return (
    <div className="flex h-[36px] bg-linear-to-b from-[#cce2fb] via-[#b9d0f7] via-40% to-[#d8e6fa]">
      <div className="flex w-[67px] items-center border-r border-[#9db7dc] pl-[10px] text-[16px] text-[#2c3f70]">Ready</div>
      <div className="ml-auto flex w-[345px] items-center border-l border-[#7e9ccf] bg-linear-to-b from-[#b4cdf3] via-[#8fb0e4] to-[#9dbcec] pl-2">
        <div className="flex h-[29px] w-[81px] border border-[#8aa5d0] bg-[#d8e5f6]">
          <button type="button" aria-label="Normal view" className="flex flex-1 items-center justify-center bg-[#f6dc7a]">
            <svg viewBox="0 0 20 18" className="h-[18px] w-5"><path d="M1 1H19V17H1ZM1 6H19M1 12H19M7 1V17M13 1V17" fill="#fff" stroke="#6b5a3c" strokeWidth="1.5" /></svg>
          </button>
          <button type="button" aria-label="Page layout view" className="flex flex-1 items-center justify-center">
            <svg viewBox="0 0 18 20" className="h-5 w-[18px]"><path d="M1 1H17V19H1Z" fill="#bcc0c8" stroke="#666b78" strokeWidth="1.5" /><path d="M5 4H13V15H5Z" fill="#fff" stroke="#666b78" /></svg>
          </button>
          <button type="button" aria-label="Page break preview" className="flex flex-1 items-center justify-center">
            <svg viewBox="0 0 18 20" className="h-5 w-[18px]"><path d="M1 1H17V19H1Z" fill="#bcc0c8" stroke="#666b78" strokeWidth="1.5" /><path d="M2 1H7V13H2ZM9 1H13V13H9Z" fill="#fff" /></svg>
          </button>
        </div>
        <span className="ml-3 text-[16px] text-[#27408b]">80%</span>
        <button type="button" aria-label="Zoom out" className="ml-3">
          <svg viewBox="0 0 24 28" className="h-7 w-6"><ellipse cx="12" cy="14" rx="10" ry="12" fill="#dfe8f6" stroke="#4e648c" strokeWidth="1.5" /><path d="M7 14H17" stroke="#3c4a66" strokeWidth="3" /></svg>
        </button>
        <input
          type="range"
          aria-label="Zoom"
          defaultValue={40}
          className="h-7 min-w-0 flex-1 appearance-none bg-[linear-gradient(#e3edfb,#e3edfb)] bg-[length:100%_2px] bg-center bg-no-repeat [&::-webkit-slider-thumb]:h-[22px] [&::-webkit-slider-thumb]:w-[13px] [&::-webkit-slider-thumb]:appearance-none [&::-webkit-slider-thumb]:rounded-b-full [&::-webkit-slider-thumb]:border-2 [&::-webkit-slider-thumb]:border-[#5a6f98] [&::-webkit-slider-thumb]:bg-[#d9e4f5]"
        />
        <button type="button" aria-label="Zoom in" className="mr-[6px]">
          <svg viewBox="0 0 24 28" className="h-7 w-6"><ellipse cx="12" cy="14" rx="10" ry="12" fill="#dfe8f6" stroke="#4e648c" strokeWidth="1.5" /><path d="M6 14H18M12 7V21" stroke="#3c4a66" strokeWidth="3" /></svg>
        </button>
      </div>
    </div>
  )
}

function TaskButton({ label, className = '', children }: { label: string; className?: string; children: React.ReactNode }) {
  return (
    <button type="button" aria-label={label} className={`flex h-16 w-[84px] items-center justify-center ${className}`}>{children}</button>
  )
}

function Taskbar() {
  return (
    <footer className="flex h-[66px] items-center gap-[5px] border-t-2 border-[#55636f] bg-linear-to-r from-[#5f6d7c] via-[#1a222e] via-8% to-[#35434f] text-white">
      <button type="button" aria-label="Start" className="flex w-[82px] shrink-0 justify-center pr-1">
        <svg viewBox="0 0 54 62" className="h-[62px] w-[54px]">
          <defs>
            <radialGradient id="start" cx="0.5" cy="0.85" r="0.8">
              <stop offset="0" stopColor="#4fd0f0" />
              <stop offset="0.5" stopColor="#1d6da0" />
              <stop offset="1" stopColor="#8fa3b4" />
            </radialGradient>
          </defs>
          <ellipse cx="27" cy="31" rx="26" ry="30" fill="url(#start)" stroke="#a9bccb" />
          <path d="M16 14C20 11 24 12 27 15L25 29C21 26 17 26 13 28Z" fill="#e8592b" />
          <path d="M29 15C33 18 37 18 42 16L40 30C35 32 31 31 27 29Z" fill="#8cc63f" />
          <path d="M13 31C17 28 21 29 25 31L23 45C19 42 15 42 11 44Z" fill="#3aa0dc" />
          <path d="M27 32C31 34 35 34 40 33L38 46C33 49 29 48 25 46Z" fill="#fbc83a" />
          <path d="M4 22C8 8 16 3 27 3S46 8 50 22C38 28 16 28 4 22Z" fill="#fff" opacity="0.25" />
        </svg>
      </button>
      <TaskButton label="Internet Explorer">
        <svg viewBox="0 0 48 54" className="h-[54px] w-12">
          <path d="M24 12C14 12 9 20 9 30S15 49 25 49C33 49 39 44 41 37H32C31 40 28 42 25 42C21 42 18 39 18 33H42C43 19 36 12 24 12ZM18 26C19 21 21 19 25 19S32 21 32 26Z" fill="#2c9be6" stroke="#1467b0" />
          <path d="M3 50C-2 40 10 20 24 8C34 0 48 -2 46 10" fill="none" stroke="#dba83a" strokeWidth="3.5" />
          <path d="M3 50C6 54 14 50 20 46" fill="none" stroke="#dba83a" strokeWidth="4" />
        </svg>
      </TaskButton>
      <TaskButton label="Windows Explorer">
        <svg viewBox="0 0 48 50" className="h-[50px] w-12">
          <path d="M1 4L4 1H16L18 4H30L33 9H44L46 12V46H1Z" fill="#f0dd92" stroke="#b99f4d" />
          <path d="M5 3H13V8H5Z" fill="#5aa646" /><path d="M17 6H26V11H17Z" fill="#c0583a" /><path d="M30 9H40V14H30Z" fill="#5a9fd0" />
          <path d="M2 14H45V45H2Z" fill="#f7e7a6" />
          <path d="M8 49V33C8 29 10 28 13 28H35C38 28 40 29 40 33V49H33V38H15V49Z" fill="#8ed0ee" stroke="#4b93b8" />
          <path d="M18 40H30V46H18Z" fill="#f2c431" />
        </svg>
      </TaskButton>
      <TaskButton label="Media Player">
        <svg viewBox="0 0 40 44" className="h-11 w-10">
          <path d="M8 1H38V38H8Z" fill="#4f9cc8" /><path d="M1 2H33V43H1Z" fill="#8fcbe6" stroke="#467fa6" />
          <ellipse cx="17" cy="22" rx="13" ry="17" fill="#e86d24" stroke="#f7d7b0" strokeWidth="1.5" />
          <path d="M11 12L26 22L11 33Z" fill="#fff" />
        </svg>
      </TaskButton>
      <TaskButton label="Messenger">
        <svg viewBox="0 0 48 54" className="h-[54px] w-12">
          <ellipse cx="24" cy="28" rx="22" ry="26" fill="#b829ae" />
          <ellipse cx="17" cy="16" rx="11" ry="12" fill="#e07ad8" opacity="0.6" />
          <ellipse cx="22" cy="36" rx="14" ry="13" fill="#8f2468" stroke="#f4c14a" strokeWidth="2.4" />
          <path d="M10 34C14 26 28 27 33 36M9 40C16 50 28 50 35 42M16 40C20 34 27 35 30 40" fill="none" stroke="#f4c14a" strokeWidth="2.6" />
          <path d="M37 17C41 24 40 32 36 36" fill="none" stroke="#e8b05a" strokeWidth="2.4" />
          <circle cx="32" cy="15" r="5" fill="#f0b8dc" stroke="#8c2f7c" /><circle cx="38" cy="9" r="5" fill="#f6d7ea" stroke="#8c2f7c" />
        </svg>
      </TaskButton>
      <TaskButton label="Sticky Notes" className="rounded-[3px] border border-[#c3c8cd] bg-linear-to-r from-[#8d9499] via-[#c9cdd0] to-[#5b6268]">
        <svg viewBox="0 0 46 42" className="h-[42px] w-[46px]">
          <path d="M6 2L18 1L14 28L1 25Z" fill="#8fd67c" /><path d="M10 5L26 8L22 38L9 34Z" fill="#8fcdee" />
          <path d="M16 14L39 6L45 30L22 40Z" fill="#fbdc52" stroke="#d8b632" />
        </svg>
      </TaskButton>
      <TaskButton label="Google Earth">
        <svg viewBox="0 0 46 52" className="h-[52px] w-[46px]">
          <ellipse cx="23" cy="26" rx="22" ry="25" fill="#2147c0" />
          <path d="M10 6C20 -2 34 2 40 14C34 8 24 8 16 6Z" fill="#8fa3c8" />
          <path d="M4 12C14 8 26 14 34 24C38 28 42 30 44 32C34 34 26 26 20 20C14 14 8 14 4 16Z" fill="#eef3fb" />
          <path d="M3 36C14 36 28 40 40 42L36 46C26 46 14 44 6 46Z" fill="#eef3fb" />
        </svg>
      </TaskButton>
      <TaskButton label="PowerPoint" className="rounded-[3px] border border-[#a9b0b8] bg-linear-to-br from-[#a2a8b0] via-[#4a505c] to-[#6b7280]">
        <svg viewBox="0 0 46 50" className="h-[50px] w-[46px]">
          <path d="M2 42V16C4 6 10 1 18 1H38V12" fill="#fbd2bf" stroke="#e36438" strokeWidth="2" />
          <path d="M8 12L45 14L43 49L4 45Z" fill="#fdf0e4" stroke="#e9a184" />
          <path d="M13 17L40 18L39 41L10 39Z" fill="#d64321" />
          <path d="M14 23H22M14 28H22M14 33H22" stroke="#fff" strokeWidth="2.4" />
          <path d="M30 22A7 7 0 1 0 37 30H30Z" fill="#fff" /><path d="M33 20A7 7 0 0 1 39 26H33Z" fill="#fff" />
        </svg>
      </TaskButton>
      <TaskButton label="Excel" className="rounded-[3px] border border-[#d7dade] bg-linear-to-br from-[#d5d8dc] via-[#9a9fa6] to-[#b4b7bc]">
        <svg viewBox="0 0 46 50" className="h-[50px] w-[46px]">
          <path d="M2 42V16C4 6 10 1 18 1H38V12" fill="#c9e3b4" stroke="#58973a" strokeWidth="2" />
          <path d="M8 12L45 14L43 49L4 45Z" fill="#e2f1d6" stroke="#83ad69" />
          <path d="M28 17H35V23H28ZM37 17H43V23H37ZM28 26H35V32H28ZM37 26H43V32H37ZM28 35H35V43H28ZM37 35H42V43H37ZM8 35H16V41H8ZM18 35H26V42H18Z" fill="#86b86a" />
          <path d="M11 17L26 33M26 16L10 33" stroke="#2f6b24" strokeWidth="5" />
        </svg>
      </TaskButton>

      <div className="ml-auto flex h-full items-center">
        <svg viewBox="0 0 12 8" className="h-2 w-3"><path d="M0 8H12L6 0Z" fill="#fff" /></svg>
        <svg viewBox="0 0 24 26" className="ml-[18px] h-[26px] w-6">
          <path d="M2 0V26" stroke="#fff" strokeWidth="2" /><path d="M3 2C9 -1 12 6 20 3V14C12 16 9 10 3 13Z" fill="#fff" />
          <ellipse cx="16" cy="18" rx="7" ry="8" fill="#d33a3a" /><path d="M12 14L20 22M20 14L12 22" stroke="#fff" strokeWidth="2.4" />
        </svg>
        <svg viewBox="0 0 20 26" className="ml-3 h-[26px] w-5">
          <path d="M10 2H2V24H11M4 0H9" fill="none" stroke="#fff" strokeWidth="2.4" /><path d="M4 15H9V22H4Z" fill="#fff" />
          <path d="M8 7H20V11C20 15 17 16 14 16S8 15 8 11Z" fill="#fff" /><path d="M11 1V8M17 1V8M14 15V26" stroke="#fff" strokeWidth="2.4" />
        </svg>
        <svg viewBox="0 0 23 20" className="ml-[15px] h-5 w-[23px]">
          <path d="M2 16H4V20H2Z" fill="#fff" />
          <path d="M6 13H9V19H6ZM10 10H13V19H10ZM14 6H17V19H14ZM18 2H21V19H18Z" fill="#4d5b68" stroke="#7b8894" />
        </svg>
        <svg viewBox="0 0 22 24" className="ml-3 h-6 w-[22px]">
          <path d="M1 8H4L10 1V23L4 16H1Z" fill="#fff" />
          <path d="M13 8C15 10 15 14 13 16M16 5C19 9 19 15 16 19M18 2C23 8 23 16 18 22" fill="none" stroke="#cfd8df" strokeWidth="1.6" />
        </svg>
        <div className="ml-5 text-center text-[16px] leading-[28px]">
          <div>5:50 PM</div>
          <div>10/25/2010</div>
        </div>
        <button type="button" aria-label="Show desktop" className="ml-[10px] h-full w-[19px] border border-[#75909c] bg-linear-to-b from-[#8a9ba3] to-[#3c5560]" />
      </div>
    </footer>
  )
}

export default function App() {
  return (
    <div className={`relative min-h-screen overflow-hidden bg-[#5a585a] px-[5%] pt-[102px] pb-[85px] ${ui}`}>
      <Backdrop />
      <main className="relative">
        <TitleBar />
        <RibbonTabs />
        <Ribbon />
        <FormulaBar />
        <div className="flex border-t border-[#7d9cc4]">
          <Sheet />
          <VerticalScroll />
        </div>
        <SheetBar />
        <StatusBar />
        <Taskbar />
      </main>
    </div>
  )
}
